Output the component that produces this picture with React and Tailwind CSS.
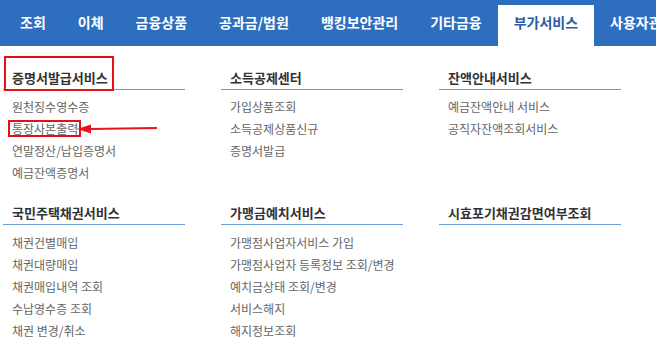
import React from 'react';

const font = { fontFamily: '"Noto Sans CJK KR", "Noto Sans", sans-serif' };

const menus = ['조회', '이체', '금융상품', '공과금/법원', '뱅킹보안관리', '기타금융', '부가서비스', '사용자관리'];

const sections = [
  { title: '증명서발급서비스', items: ['원천징수영수증', '통장사본출력', '연말정산/납입증명서', '예금잔액증명서'] },
  { title: '소득공제센터', items: ['가입상품조회', '소득공제상품신규', '증명서발급'] },
  { title: '잔액안내서비스', items: ['예금잔액안내 서비스', '공직자잔액조회서비스'] },
  { title: '국민주택채권서비스', items: ['채권건별매입', '채권대량매입', '채권매입내역 조회', '수납영수증 조회', '채권 변경/취소'] },
  { title: '가맹금예치서비스', items: ['가맹점사업자서비스 가입', '가맹점사업자 등록정보 조회/변경', '예치금상태 조회/변경', '서비스해지', '해지정보조회'] },
  { title: '시효포기채권감면여부조회', items: [] },
];

function Arrow() {
  return (
    <svg className="absolute left-[74px] top-[5px]" width="82" height="12" viewBox="0 0 82 12">
      <line x1="12" y1="6" x2="80" y2="5" stroke="#e8141c" strokeWidth="2" />
      <polygon points="0,6 14,1.5 14,10.5" fill="#e8141c" />
    </svg>
  );
}

export default function App() {
  return (
    <div className="w-[656px] h-[361px] bg-white overflow-hidden" style={font}>
      <div className="h-[46px] bg-[#2e6ebf] flex items-end pl-[4px] overflow-hidden whitespace-nowrap">
        {menus.map((m) => (
          <div
            key={m}
            className={
              m === '부가서비스'
                ? 'h-[41px] px-[16px] pb-[6px] flex items-center bg-white text-[#2a5ea6] text-[14px] font-bold shrink-0'
                : 'h-[41px] px-[16px] pb-[6px] flex items-center text-white text-[14px] font-bold shrink-0'
            }
          >
            {m}
          </div>
        ))}
      </div>

      <div className="grid grid-cols-[182px_182px_182px] gap-x-[36px] gap-y-[18px] pl-[3px] pt-[21px]">
        {sections.map((s, i) => (
          <div key={s.title}>
            <div className="relative border-b border-[#6f9dd5] leading-[22px] pl-[9px] text-[13px] font-bold text-[#333]">
              {s.title}
              {i === 0 && (
                <div className="absolute left-[1px] top-[-11px] w-[110px] h-[35px] border-2 border-[#e60f17]" />
              )}
            </div>
            <ul className={i < 3 ? 'mt-[6px]' : 'mt-[7px]'}>
              {s.items.map((it) => (
                <li key={it} className="relative pl-[9px] leading-[22px] text-[12px] text-[#666]">
                  {it}
                  {it === '통장사본출력' && (
                    <>
                      <div className="absolute left-[5px] top-[2px] w-[73px] h-[17px] border-2 border-[#e60f17]" />
                      <Arrow />
                    </>
                  )}
                </li>
              ))}
            </ul>
          </div>
        ))}
      </div>
    </div>
  );
}
